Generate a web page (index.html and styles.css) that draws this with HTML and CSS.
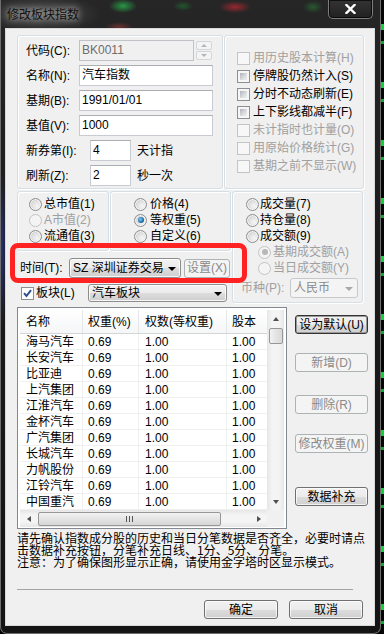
FILE: index.html
```html
<!DOCTYPE html>
<html lang="zh-CN">
<head>
<meta charset="utf-8">
<title>修改板块指数</title>
<link rel="stylesheet" href="styles.css">
</head>
<body>
<div class="screen">
  <div class="window">
    <div class="titlebar">
      <div class="title">修改板块指数</div>
      <div class="close">
        <svg width="11" height="10" viewBox="0 0 11 10"><path d="M1.5 1 L9.5 9 M9.5 1 L1.5 9" stroke="#fff" stroke-width="2.4" stroke-linecap="square"/></svg>
      </div>
    </div>
    <div class="client">
      <div class="row-a">
        <div class="group g-basic">
          <div class="frow">
            <span class="lbl l53">代码(C):</span>
            <div class="tb dis w115">BK0011</div>
            <div class="spin"><span class="sp up"></span><span class="sp dn"></span></div>
          </div>
          <div class="frow">
            <span class="lbl l53">名称(N):</span>
            <div class="tb w134">汽车指数</div>
          </div>
          <div class="frow">
            <span class="lbl l53">基期(B):</span>
            <div class="tb w134">1991/01/01</div>
          </div>
          <div class="frow">
            <span class="lbl l53">基值(V):</span>
            <div class="tb w134">1000</div>
          </div>
          <div class="frow">
            <span class="lbl l64">新券第(I):</span>
            <div class="tb w41">4</div>
            <span class="after">天计指</span>
          </div>
          <div class="frow">
            <span class="lbl l64">刷新(Z):</span>
            <div class="tb w41">2</div>
            <span class="after">秒一次</span>
          </div>
        </div>
        <div class="group g-opts">
          <div class="crow dis"><span class="cb dis"></span>用历史股本计算(H)</div>
          <div class="crow"><span class="cb"></span>停牌股仍然计入(S)</div>
          <div class="crow"><span class="cb"></span>分时不动态刷新(E)</div>
          <div class="crow"><span class="cb"></span>上下影线都减半(F)</div>
          <div class="crow dis"><span class="cb dis"></span>未计指时也计量(O)</div>
          <div class="crow dis"><span class="cb dis"></span>用原始价格统计(G)</div>
          <div class="crow dis"><span class="cb dis"></span>基期之前不显示(W)</div>
        </div>
      </div>

      <div class="row-b">
        <div class="col-l">
          <div class="radgroups">
            <div class="group g-r1">
              <div class="rrow"><span class="rd"></span>总市值(1)</div>
              <div class="rrow dis"><span class="rd dis"></span>A市值(2)</div>
              <div class="rrow"><span class="rd"></span>流通值(3)</div>
            </div>
            <div class="group g-r2">
              <div class="rrow"><span class="rd"></span>价格(4)</div>
              <div class="rrow"><span class="rd on"></span>等权重(5)</div>
              <div class="rrow"><span class="rd"></span>自定义(6)</div>
            </div>
          </div>
          <div class="timerow">
            <span class="lbl l49">时间(T):</span>
            <div class="combo w112"><span class="ctext">SZ 深圳证券交易</span><span class="arr"></span></div>
            <div class="btn dis b46">设置(X)</div>
          </div>
          <div class="blockrow">
            <span class="cb on"><svg width="11" height="11" viewBox="0 0 11 11"><path d="M2 5.2 L4.5 8 L9 2.2" fill="none" stroke="#2b4e8f" stroke-width="2"/></svg></span>
            <span class="blbl">板块(L)</span>
            <div class="combo w139"><span class="ctext">汽车板块</span><span class="arr"></span></div>
          </div>
        </div>
        <div class="group g-r3">
          <div class="rrow"><span class="rd"></span>成交量(7)</div>
          <div class="rrow"><span class="rd"></span>持仓量(8)</div>
          <div class="rrow"><span class="rd"></span>成交额(9)</div>
          <div class="rrow sub dis"><span class="rd dis ondis"></span>基期成交额(A)</div>
          <div class="rrow sub dis"><span class="rd dis"></span>当日成交额(Y)</div>
          <div class="currow">
            <span class="lbl l49 grey">币种(P):</span>
            <div class="combo dis w68"><span class="ctext">人民币</span><span class="arr"></span></div>
          </div>
        </div>
      </div>

      <div class="row-c">
        <div class="list">
          <div class="lv">
            <div class="lv-main">
              <div class="lv-head">
                <span class="c1">名称</span><span class="c2">权重(%)</span><span class="c3">权数(等权重)</span><span class="c4">股本</span>
              </div>
              <div class="lv-row"><span class="c1">海马汽车</span><span class="c2">0.69</span><span class="c3">1.00</span><span class="c4">1.00</span></div>
              <div class="lv-row"><span class="c1">长安汽车</span><span class="c2">0.69</span><span class="c3">1.00</span><span class="c4">1.00</span></div>
              <div class="lv-row"><span class="c1">比亚迪</span><span class="c2">0.69</span><span class="c3">1.00</span><span class="c4">1.00</span></div>
              <div class="lv-row"><span class="c1">上汽集团</span><span class="c2">0.69</span><span class="c3">1.00</span><span class="c4">1.00</span></div>
              <div class="lv-row"><span class="c1">江淮汽车</span><span class="c2">0.69</span><span class="c3">1.00</span><span class="c4">1.00</span></div>
              <div class="lv-row"><span class="c1">金杯汽车</span><span class="c2">0.69</span><span class="c3">1.00</span><span class="c4">1.00</span></div>
              <div class="lv-row"><span class="c1">广汽集团</span><span class="c2">0.69</span><span class="c3">1.00</span><span class="c4">1.00</span></div>
              <div class="lv-row"><span class="c1">长城汽车</span><span class="c2">0.69</span><span class="c3">1.00</span><span class="c4">1.00</span></div>
              <div class="lv-row"><span class="c1">力帆股份</span><span class="c2">0.69</span><span class="c3">1.00</span><span class="c4">1.00</span></div>
              <div class="lv-row"><span class="c1">江铃汽车</span><span class="c2">0.69</span><span class="c3">1.00</span><span class="c4">1.00</span></div>
              <div class="lv-row"><span class="c1">中国重汽</span><span class="c2">0.69</span><span class="c3">1.00</span><span class="c4">1.00</span></div>
            </div>
            <div class="vscroll">
              <span class="sbtn"><span class="tri-up"></span></span>
              <span class="vthumb"></span>
              <span class="vtrack"></span>
              <span class="sbtn"><span class="tri-dn"></span></span>
            </div>
            <div class="hscroll">
              <span class="sbtn"><span class="tri-lt"></span></span>
              <span class="hthumb"><span class="grip"></span></span>
              <span class="htrack"></span>
              <span class="sbtn"><span class="tri-rt"></span></span>
            </div>
            <div class="corner"></div>
          </div>
        </div>
        <div class="btncol">
          <div class="btn def">设为默认(U)</div>
          <div class="btn dis">新增(D)</div>
          <div class="btn dis">删除(R)</div>
          <div class="btn dis">修改权重(M)</div>
          <div class="btn">数据补充</div>
        </div>
      </div>

      <div class="note">请先确认指数成分股的历史和当日分笔数据是否齐全，必要时请点击数据补充按钮，分笔补充日线、1分、5分、分笔。
注意：为了确保图形显示正确，请使用金字塔时区显示模式。</div>
      <div class="sep"></div>
      <div class="footer">
        <div class="btn b74">确定</div>
        <div class="btn b74">取消</div>
      </div>

      <div class="redbox"></div>
    </div>
  </div>
  <div class="strip"></div>
</div>
</body>
</html>
```

FILE: styles.css
```css
* { box-sizing: border-box; }
html, body { margin: 0; padding: 0; }
body {
  width: 384px;
  height: 634px;
  overflow: hidden;
  background: #000;
  font: 12px/16px "Liberation Sans", "Noto Sans CJK SC", sans-serif;
  color: #000;
}
.screen { display: flex; width: 384px; height: 634px; }

.window {
  width: 381px;
  height: 634px;
  flex: none;
  display: flex;
  flex-direction: column;
  padding: 0 5px 7px 4px;
  border: 1px solid #6e6e6e;
  border-top: none;
  border-radius: 0 0 7px 7px;
  background:
    radial-gradient(ellipse 14px 7px at 122px 6px, rgba(40,190,80,.75), transparent),
    radial-gradient(ellipse 10px 5px at 182px 6px, rgba(30,120,50,.6), transparent),
    radial-gradient(ellipse 16px 6px at 234px 7px, rgba(200,40,50,.7), transparent),
    radial-gradient(ellipse 10px 6px at 312px 7px, rgba(40,140,60,.5), transparent),
    radial-gradient(ellipse 14px 5px at 118px 27px, rgba(160,60,60,.55), transparent),
    radial-gradient(ellipse 60px 20px at 40px 14px, rgba(130,130,130,.45), transparent),
    radial-gradient(ellipse 6px 80px at 0px 250px, rgba(40,60,170,.7), transparent),
    linear-gradient(#262626, #1b1b1b 40%, #141414);
}

.titlebar {
  height: 28px;
  flex: none;
  display: flex;
  justify-content: space-between;
  align-items: flex-start;
}
.title {
  margin: 6px 0 0 2px;
  font: 12px/16px "Noto Sans CJK SC", sans-serif;
  color: #101010;
  text-shadow: 0 0 6px rgba(210,210,210,.9), 0 0 10px rgba(200,200,200,.6);
}
.close {
  width: 45px;
  height: 19px;
  margin-right: 2px;
  display: flex;
  align-items: center;
  justify-content: center;
  border: 1px solid #7d7d7d;
  border-top: none;
  border-radius: 0 0 5px 5px;
  background: linear-gradient(rgba(60,60,60,.6), rgba(30,30,30,.6));
  box-shadow: inset 0 0 0 1px rgba(0,0,0,.7);
}

.client {
  position: relative;
  height: 598px;
  flex: none;
  background: #f0f0f0;
  border: 1px solid #d9d9d9;
  padding: 6px 0 0 11px;
}

/* group boxes */
.group {
  border: 1px solid #d5dfe5;
  border-radius: 3px;
  box-shadow: inset 1px 1px 0 #fff, 1px 1px 0 #fff;
}

.row-a { display: flex; gap: 1px; height: 154px; }
.g-basic { width: 206px; padding: 4px 0 0 8px; }
.g-opts { width: 140px; padding: 13px 0 0 12px; }

.frow { display: flex; align-items: center; height: 21px; margin-bottom: 4px; }
.lbl { white-space: nowrap; flex: none; }
.l53 { width: 53px; }
.l64 { width: 64px; }
.l49 { width: 49px; }
.grey { color: #a0a0a0; }
.after { margin-left: 6px; }

.tb {
  height: 21px;
  border: 1px solid #c8ccd2;
  border-top-color: #abadb3;
  background: #fff;
  padding: 1px 0 0 2px;
  line-height: 17px;
  white-space: nowrap;
}
.tb.dis { background: #f0f0f0; color: #6d6d6d; border-color: #c0c4c8; }
.w115 { width: 115px; }
.w134 { width: 134px; }
.w41 { width: 41px; }

.spin { margin-left: 2px; width: 16px; height: 19px; display: flex; flex-direction: column; gap: 1px; }
.sp {
  flex: 1;
  border: 1px solid #d4d7da;
  border-radius: 2px;
  background: #f4f4f4;
  display: flex;
  align-items: center;
  justify-content: center;
}
.sp.up::after { content: ""; border: 3px solid transparent; border-bottom: 3px solid #b5b5b5; border-top: 0; }
.sp.dn::after { content: ""; border: 3px solid transparent; border-top: 3px solid #b5b5b5; border-bottom: 0; }

/* checkboxes */
.crow { display: flex; align-items: center; height: 18px; white-space: nowrap; }
.crow.dis { color: #a0a0a0; }
.cb {
  width: 13px;
  height: 13px;
  flex: none;
  margin-right: 3px;
  border: 1px solid #8e8f8f;
  padding: 2px;
  background: linear-gradient(135deg, #aeb3b9 0%, #d9dadc 55%, #f0f0f0 100%) content-box, #f6f6f6;
  display: flex;
  align-items: center;
  justify-content: center;
}
.cb.dis { border-color: #c4c4c4; background: #f7f7f7; }
.cb.on { padding: 0; background: #fff; }

/* radios */
.rrow { display: flex; align-items: center; height: 16px; white-space: nowrap; }
.rrow.dis { color: #a0a0a0; }
.rd {
  width: 13px;
  height: 13px;
  flex: none;
  border-radius: 50%;
  border: 1px solid #8e8f8f;
  background: radial-gradient(circle at 65% 65%, #f6f6f6 0%, #dcdcdc 55%, #b9bcc0 100%);
  box-shadow: inset 0 0 0 1px #f4f4f4;
  display: flex;
  align-items: center;
  justify-content: center;
}
.rd.dis { border-color: #c4c4c4; background: #f4f4f4; }
.rd.on::after {
  content: "";
  width: 6px; height: 6px; border-radius: 50%;
  background: radial-gradient(circle at 40% 40%, #7fd0f8, #1a6aa6 60%, #0c3f68);
}
.rd.ondis::after {
  content: "";
  width: 6px; height: 6px; border-radius: 50%;
  background: #b8b8b8;
}

.row-b { display: flex; gap: 1px; margin-top: 2px; }
.col-l { width: 214px; }
.radgroups { display: flex; gap: 1px; height: 60px; }
.g-r1 { width: 92px; padding: 4px 0 0 11px; }
.g-r1 .rd { margin-right: 2px; }
.g-r2 { width: 121px; padding: 4px 0 0 23px; }
.g-r2 .rd { margin-right: 3px; }
.g-r3 { width: 131px; height: 112px; padding: 4px 0 0 13px; }
.g-r3 .rd { margin-right: 1px; }
.g-r3 .rrow.sub { padding-left: 12px; }
.g-r3 .rrow.sub .rd { margin-right: 2px; }

.currow { display: flex; align-items: center; height: 20px; margin: 2px 0 0 -5px; }

.timerow { display: flex; align-items: center; height: 20px; margin: 7px 0 0 3px; }
.blockrow { display: flex; align-items: center; height: 18px; margin: 6px 0 0 4px; }
.blockrow .cb { margin-right: 2px; }
.blbl { width: 52px; white-space: nowrap; }

.combo {
  height: 20px;
  display: flex;
  align-items: center;
  justify-content: space-between;
  padding: 0 4px 0 3px;
  border: 1px solid #8d8d8d;
  border-radius: 3px;
  background: linear-gradient(#f2f2f2 0%, #ebebeb 50%, #dddddd 51%, #cfcfcf 100%);
  box-shadow: inset 0 0 0 1px rgba(255,255,255,.8);
  white-space: nowrap;
}
.blockrow .combo { height: 18px; }
.combo .arr { width: 0; height: 0; border: 4px solid transparent; border-top: 4px solid #000; border-bottom: 0; margin-top: 1px; }
.combo.dis { border-color: #c6c9cc; background: #f4f4f4; color: #8a8a8a; box-shadow: none; }
.combo.dis .arr { border-top-color: #a8a8a8; }
.w112 { width: 112px; }
.w139 { width: 139px; }
.w68 { width: 68px; }

/* buttons */
.btn {
  height: 19px;
  display: flex;
  align-items: center;
  justify-content: center;
  white-space: nowrap;
  border: 1px solid #707070;
  border-radius: 3px;
  background: linear-gradient(#f2f2f2 0%, #ebebeb 50%, #dddddd 51%, #cfcfcf 100%);
  box-shadow: inset 0 0 0 1px rgba(255,255,255,.75);
  line-height: 16px;
}
.btn.dis {
  border-color: #adb2b5;
  background: #f4f4f4;
  color: #8a8a8a;
  box-shadow: none;
}
.btn.def { border-color: #333; box-shadow: inset 0 0 0 1px #9a9a9a; }
.b46 { width: 46px; margin-left: 3px; }
.b74 { width: 74px; }

/* list view */
.row-c { display: flex; margin-top: 4px; }
.list {
  width: 270px;
  height: 222px;
  flex: none;
  border: 1px solid #828790;
  background: #fff;
  padding: 2px 2px 1px 2px;
}
.lv {
  display: grid;
  grid-template-columns: 247px 17px;
  grid-template-rows: 200px 17px;
}
.lv-main { overflow: hidden; }
.lv-head {
  display: flex;
  height: 24px;
  border-bottom: 1px solid #d5d5d5;
  background: linear-gradient(#ffffff, #f5f6f7);
}
.lv-head span {
  display: flex;
  align-items: center;
  border-right: 1px solid #e3e6ea;
  white-space: nowrap;
  overflow: hidden;
}
.lv-row { display: flex; height: 16px; }
.lv-row span {
  display: flex;
  align-items: center;
  border-right: 1px solid #f0f0f0;
  border-bottom: 1px solid #f0f0f0;
  white-space: nowrap;
  overflow: hidden;
}
.c1 { width: 63px; padding-left: 6px; }
.c2 { width: 56px; padding-left: 5px; }
.c3 { width: 88px; padding-left: 6px; }
.c4 { width: 40px; padding-left: 5px; }
.lv-head .c4, .lv-row .c4 { border-right: 0; }

.vscroll {
  display: flex;
  flex-direction: column;
  background: linear-gradient(90deg, #e6e6e6, #f4f4f4 30%, #f4f4f4 70%, #e6e6e6);
}
.sbtn { flex: none; width: 17px; height: 17px; display: flex; align-items: center; justify-content: center; }
.tri-up { border: 3px solid transparent; border-bottom: 4px solid #505050; border-top: 0; }
.tri-dn { border: 3px solid transparent; border-top: 4px solid #505050; border-bottom: 0; }
.tri-lt { border: 3px solid transparent; border-right: 4px solid #505050; border-left: 0; }
.tri-rt { border: 3px solid transparent; border-left: 4px solid #505050; border-right: 0; }
.vthumb {
  flex: none;
  height: 16px;
  margin: 1px 1px 0 2px;
  border: 1px solid #979797;
  border-radius: 2px;
  background: linear-gradient(90deg, #f2f2f2, #e4e4e4 50%, #d9d9d9);
}
.vtrack { flex: 1; }
.hscroll {
  display: flex;
  background: linear-gradient(#e6e6e6, #f4f4f4 30%, #f4f4f4 70%, #e6e6e6);
}
.hscroll .sbtn { width: 17px; }
.hthumb {
  flex: none;
  width: 183px;
  margin: 2px 0 1px 1px;
  border: 1px solid #979797;
  border-radius: 2px;
  background: linear-gradient(#f2f2f2, #e4e4e4 50%, #d6d6d6);
  display: flex;
  align-items: center;
  justify-content: center;
}
.grip {
  width: 7px; height: 6px;
  background: repeating-linear-gradient(90deg, #555 0 1px, transparent 1px 3px);
}
.htrack { flex: 1; }
.corner { background: #f0f0f0; }

.btncol { display: flex; flex-direction: column; width: 73px; margin-left: 8px; }
.btncol .btn:nth-child(1) { margin-top: 8px; }
.btncol .btn:nth-child(2) { margin-top: 19px; }
.btncol .btn:nth-child(3) { margin-top: 23px; }
.btncol .btn:nth-child(4) { margin-top: 20px; }
.btncol .btn:nth-child(5) { margin-top: 34px; }

.note {
  margin-top: 3px;
  width: 350px;
  font-family: "Noto Sans CJK SC", sans-serif;
  font-size: 12px;
  line-height: 12px;
  white-space: pre-line;
}
.sep { width: 336px; height: 1px; background: #a5a5a5; margin-top: 21px; }
.footer { display: flex; justify-content: flex-end; gap: 11px; width: 346px; margin-top: 10px; }

.redbox {
  position: absolute;
  left: 4px;
  top: 214px;
  width: 237px;
  height: 40px;
  border: 5px solid #ff2222;
  border-radius: 8px;
}

.strip {
  flex: 1;
  background:
    repeating-linear-gradient(180deg, transparent 0 24px, #12d03a 24px 30px, transparent 30px 41px, #0ea82f 41px 44px, transparent 44px 58px),
    #050505;
}
```
